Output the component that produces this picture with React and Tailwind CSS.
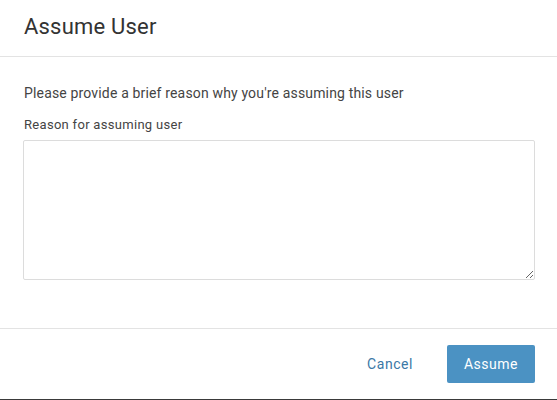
import React from 'react';

export default function App() {
  return (
    <div className="w-[557px] h-[400px] bg-white flex flex-col font-['Roboto',sans-serif] border-b border-[#3a3a3a]">
      <header className="h-[57px] px-6 flex items-center border-b border-[#e3e3e3]">
        <h1 className="text-[22px] text-[#333333] leading-none -mt-[2px] tracking-[0.2px]">Assume User</h1>
      </header>

      <div className="px-6 pt-[27px] flex flex-col">
        <p className="text-[14px] text-[#444444] leading-[18px] tracking-[0.16px]">
          Please provide a brief reason why you're assuming this user
        </p>
        <label className="text-[13px] text-[#444444] leading-[16px] mt-[15px] tracking-[0.3px]">Reason for assuming user</label>
        <textarea className="mt-[7px] -ml-px w-[512px] h-[140px] border border-[#dcdcdc] rounded-[2px] outline-none resize-y" />
      </div>

      <footer className="mt-auto h-[71px] border-t border-[#e3e3e3] flex items-center justify-end gap-[34px] px-[22px]">
        <button className="text-[14px] text-[#3b78a6] tracking-[0.55px]">Cancel</button>
        <button className="w-[88px] h-[38px] bg-[#4b92c3] text-white text-[14px] tracking-[0.5px] rounded-[2px]">
          Assume
        </button>
      </footer>
    </div>
  );
}
